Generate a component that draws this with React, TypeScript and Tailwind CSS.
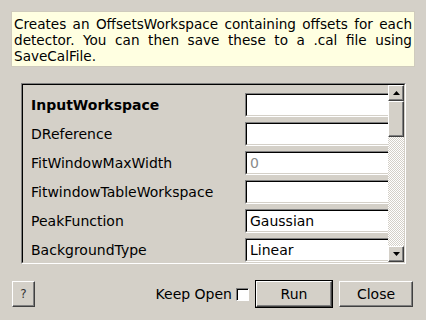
import React from "react";

const rows = [
  { label: "InputWorkspace", bold: true, value: "" },
  { label: "DReference", value: "" },
  { label: "FitWindowMaxWidth", value: "0", gray: true },
  { label: "FitwindowTableWorkspace", value: "" },
  { label: "PeakFunction", value: "Gaussian" },
  { label: "BackgroundType", value: "Linear" },
];

function ArrowButton({ up }: { up?: boolean }) {
  return (
    <div className="w-[16px] h-[16px] bg-[#d4d0c8] border border-t-white border-l-white border-r-[#404040] border-b-[#404040] shadow-[inset_-1px_-1px_0_#808080] flex items-center justify-center">
      <svg width="7" height="4" viewBox="0 0 7 4">
        {up ? <polygon points="3.5,0 7,4 0,4" fill="#000" /> : <polygon points="0,0 7,0 3.5,4" fill="#000" />}
      </svg>
    </div>
  );
}

export default function App() {
  return (
    <div className="w-[426px] h-[320px] bg-[#d4d0c8] font-['DejaVu_Sans',sans-serif] text-[14px] text-black flex flex-col overflow-hidden">
      <div className="mx-[11px] mt-[11px] h-[56px] bg-[#ffffe1] border border-[#cfcbbd] px-[2px] pt-[4px] text-[13.6px] leading-[16px] text-justify">
        Creates an OffsetsWorkspace containing offsets for each detector. You can then save these to a .cal file using SaveCalFile.
      </div>

      <div className="ml-[21px] mt-[16px] w-[385px] h-[181px] border border-t-[#808080] border-l-[#808080] border-r-white border-b-white">
        <div className="w-full h-full border border-t-black border-l-black border-r-[#d4d0c8] border-b-[#d4d0c8] flex">
          <div className="flex-1 overflow-hidden pt-[8px] pl-[8px] flex flex-col gap-[5px]">
            {rows.map((r) => (
              <div key={r.label} className="flex items-center h-[24px] shrink-0">
                <div className={`w-[214px] shrink-0 pt-[1px] ${r.bold ? "font-bold" : ""}`}>{r.label}</div>
                <div className="w-[160px] h-[24px] shrink-0 bg-white border border-t-[#808080] border-l-[#808080] border-r-white border-b-white">
                  <div className={`w-full h-full border border-t-black border-l-black border-r-[#d4d0c8] border-b-[#d4d0c8] pl-[3px] pt-[1px] flex items-center ${r.gray ? "text-[#8a8a8a]" : ""}`}>
                    {r.value}
                  </div>
                </div>
              </div>
            ))}
          </div>
          <div className="w-[16px] flex flex-col shrink-0">
            <ArrowButton up />
            <div className="w-[16px] h-[36px] bg-[#d4d0c8] border border-t-white border-l-white border-r-[#404040] border-b-[#404040] shadow-[inset_-1px_-1px_0_#808080]" />
            <div className="flex-1 [background-image:repeating-conic-gradient(#d4d0c8_0%_25%,#ffffff_0%_50%)] [background-size:2px_2px]" />
            <ArrowButton />
          </div>
        </div>
      </div>

      <div className="mt-[16px] h-[28px] flex items-center pl-[12px] pr-[13px]">
        <div className="w-[23px] h-[26px] border border-t-white border-l-white border-r-[#404040] border-b-[#404040] shadow-[inset_-1px_-1px_0_#808080] flex items-center justify-center text-[12px] text-[#333]">
          ?
        </div>
        <div className="flex-1" />
        <span>Keep Open</span>
        <div className="ml-[4px] w-[13px] h-[13px] bg-white border border-t-[#808080] border-l-[#808080] border-r-white border-b-white shadow-[inset_1px_1px_0_#000]" />
        <div className="ml-[6px] w-[78px] h-[28px] border border-black">
          <div className="w-full h-full border border-t-white border-l-white border-r-[#404040] border-b-[#404040] shadow-[inset_-1px_-1px_0_#808080] flex items-center justify-center">
            Run
          </div>
        </div>
        <div className="ml-[6px] w-[74px] h-[26px] border border-t-white border-l-white border-r-[#404040] border-b-[#404040] shadow-[inset_-1px_-1px_0_#808080] flex items-center justify-center">
          Close
        </div>
      </div>
    </div>
  );
}
